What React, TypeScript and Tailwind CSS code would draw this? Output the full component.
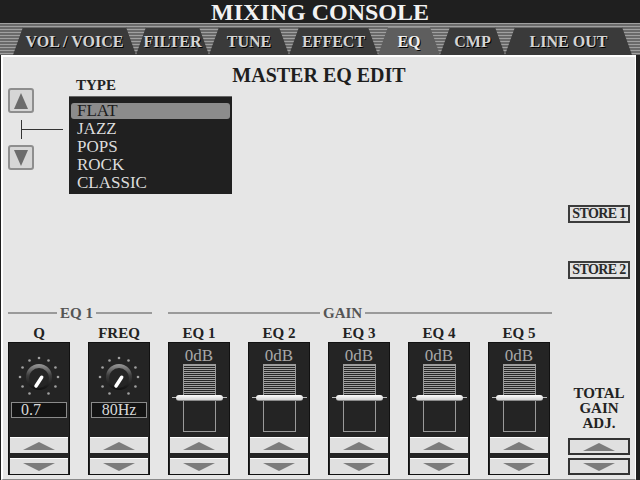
import React from "react";

const tabs = [
  { label: "VOL / VOICE", w: "w-[123px]" },
  { label: "FILTER", w: "w-[73px]" },
  { label: "TUNE", w: "w-[80px]" },
  { label: "EFFECT", w: "w-[89px]" },
  { label: "EQ", w: "w-[62px]", active: true },
  { label: "CMP", w: "w-[65px]" },
  { label: "LINE OUT", w: "w-[127px]" },
];

const types = ["FLAT", "JAZZ", "POPS", "ROCK", "CLASSIC"];

const gains = ["EQ 1", "EQ 2", "EQ 3", "EQ 4", "EQ 5"];

function Knob() {
  const dots = [];
  for (let i = 0; i < 12; i++) {
    if (i === 6) continue;
    const a = (i * 30 * Math.PI) / 180;
    dots.push(
      <circle key={i} cx={22 + 19 * Math.sin(a)} cy={22 - 19 * Math.cos(a)} r={1.3} fill="#a0a0a0" />
    );
  }
  return (
    <svg width="44" height="44" viewBox="0 0 44 44">
      <defs>
        <linearGradient id="knobRing" x1="0" y1="0" x2="0" y2="1">
          <stop offset="0" stopColor="#9a9a9a" />
          <stop offset="0.45" stopColor="#3c3c3c" />
          <stop offset="1" stopColor="#101010" />
        </linearGradient>
      </defs>
      {dots}
      <circle cx="22" cy="22" r="13" fill="url(#knobRing)" />
      <circle cx="22" cy="23" r="10" fill="#252525" />
      <line x1="24.7" y1="22.3" x2="19" y2="31" stroke="#ffffff" strokeWidth="3.5" strokeLinecap="round" />
    </svg>
  );
}

function Tri({ up }: { up?: boolean }) {
  return (
    <svg width="32" height="8" viewBox="0 0 32 8">
      <polygon points={up ? "0,8 16,0 32,8" : "0,0 32,0 16,8"} fill="#7c7c7c" />
    </svg>
  );
}

function BoxButtons() {
  return (
    <div className="mt-auto flex flex-col gap-[5px]">
      <div className="mx-px flex h-[16px] items-center justify-center border-t border-white bg-[#e0e0e0]">
        <Tri up />
      </div>
      <div className="mx-px flex h-[16px] items-center justify-center border-t border-white bg-[#e0e0e0]">
        <Tri />
      </div>
    </div>
  );
}

function KnobBox({ value, left }: { value: string; left?: boolean }) {
  return (
    <div className="flex h-[133px] flex-col border border-[#111] bg-[#242424]">
      <div className="mt-[12px] flex justify-center">
        <Knob />
      </div>
      <div
        className={
          "mx-[2px] mt-[3px] h-[16px] border border-[#8a8a8a] bg-[#131313] text-[16px] leading-[14px] text-[#d8d8d8] " +
          (left ? "pl-[9px] text-left" : "text-center")
        }
      >
        {value}
      </div>
      <BoxButtons />
    </div>
  );
}

function SliderBox() {
  return (
    <div className="flex h-[133px] flex-col border border-[#111] bg-[#242424]">
      <div className="mt-[4px] text-center text-[17px] leading-[17px] text-[#a8a8a8]">0dB</div>
      <div className="relative mx-auto h-[68px] w-[33px] border border-[#9a9a9a]">
        <div className="h-[32px] bg-[repeating-linear-gradient(to_bottom,#a0a0a0_0px,#a0a0a0_1px,#262626_1px,#262626_2px)]" />
        <div className="absolute -left-[12px] -right-[12px] top-[30px] h-[6px] bg-[linear-gradient(to_bottom,transparent_2px,#bdbdbd_2px,#bdbdbd_3px,transparent_3px)] px-[4px]">
          <div className="h-full rounded-[3px] border-b border-[#8a8a8a] bg-[linear-gradient(to_bottom,#ffffff,#d4d4d4)]" />
        </div>
      </div>
      <BoxButtons />
    </div>
  );
}

function SideButton({ up }: { up?: boolean }) {
  return (
    <div className="flex h-[25px] w-[26px] items-center justify-center rounded-[3px] border-2 border-[#8e8e8e] bg-[#d6d6d6]">
      <svg width="14" height="16" viewBox="0 0 14 16">
        <polygon points={up ? "0,16 7,0 14,16" : "0,0 14,0 7,16"} fill="#6c6c6c" />
      </svg>
    </div>
  );
}

function Store({ label }: { label: string }) {
  return (
    <div className="flex h-[18px] w-[62px] items-center justify-center border-2 border-[#3c3c3c] bg-[#e2e2e2] text-[14px] font-bold leading-[14px] tracking-[-0.6px] text-[#2a2a2a]">
      {label}
    </div>
  );
}

export default function App() {
  return (
    <div className="flex h-[480px] w-[640px] flex-col overflow-hidden bg-[#1f1f1f] font-['Liberation_Serif','Times_New_Roman',serif]">
      {/* title */}
      <div className="h-[23px] text-center text-[24px] font-bold leading-[24px] text-[#f2f2f2]">MIXING CONSOLE</div>

      {/* tabs */}
      <div className="flex h-[32px] items-end bg-[repeating-linear-gradient(to_bottom,#a0a0a0_0px,#a0a0a0_1px,#6a6a6a_1px,#6a6a6a_3px)] pl-[13px]">
        {tabs.map((t) => (
          <div
            key={t.label}
            className={
              "flex h-[28px] shrink-0 items-center justify-center border-t pt-px [clip-path:polygon(10px_0,calc(100%_-_10px)_0,100%_100%,0_100%)] text-[16px] font-bold [text-shadow:1px_1px_0_#000] " +
              t.w +
              " " +
              (t.active
                ? "border-[#8a8a8a] bg-[#5e5e5e] text-[#f0f0f0]"
                : "border-[#6a6a6a] bg-[#3a3a3a] text-[#d4d4d4]")
            }
          >
            {t.label}
          </div>
        ))}
      </div>

      {/* main panel */}
      <div className="ml-[1px] mr-[4px] flex flex-1 flex-col border-b border-l-2 border-r border-t-2 border-b-[#8a8a8a] border-l-white border-r-white border-t-white bg-[#e6e6e6]">
        <div className="grid h-[245px]">
          <div className="col-start-1 row-start-1 pt-[9px] text-center text-[20px] font-bold leading-[19px] text-[#1e1e1e]">
            MASTER EQ EDIT
          </div>
          <div className="col-start-1 row-start-1 flex">
            <div className="ml-[5px] mt-[31px] flex w-[26px] shrink-0 flex-col">
              <SideButton up />
              <div className="flex h-[32px] w-[60px] items-center">
                <div className="ml-[13px] h-[19px] w-px bg-[#333]" />
                <div className="h-px w-[41px] bg-[#333]" />
              </div>
              <SideButton />
            </div>

            <div className="ml-[35px] mt-[21px] flex flex-col">
              <div className="pl-[7px] text-[15px] font-bold leading-[15px] text-[#222]">TYPE</div>
              <div className="mt-[3px] h-[98px] w-[163px] border-t border-[#666] bg-[#202020] pt-[5px]">
                {types.map((t, i) => (
                  <div
                    key={t}
                    className={
                      "mx-[2px] px-[6px] text-[17px] " +
                      (i === 0
                        ? "my-px h-[16px] rounded-[3px] bg-[#8c8c8c] leading-[16px] text-[#1c1c1c]"
                        : "h-[18px] leading-[18px] text-[#dcdcdc]")
                    }
                  >
                    {t}
                  </div>
                ))}
              </div>
            </div>

            <div className="ml-auto mr-[5px] mt-[148px] flex flex-col gap-[38px]">
              <Store label="STORE 1" />
              <Store label="STORE 2" />
            </div>
          </div>
        </div>

        {/* bottom controls */}
        <div className="grid grid-cols-[repeat(8,62px)] grid-rows-[22px_18px_133px] gap-x-[18px] pl-[5px]">
          <div className="col-span-2 flex items-center">
            <div className="h-[2px] w-[49px] bg-[#9a9a9a]" />
            <div className="mx-[3px] text-[15px] font-bold leading-[15px] text-[#555]">EQ 1</div>
            <div className="-mr-[2px] h-[2px] flex-1 bg-[#9a9a9a]" />
          </div>
          <div className="col-span-5 flex items-center">
            <div className="h-[2px] w-[152px] bg-[#9a9a9a]" />
            <div className="mx-[3px] text-[15px] font-bold leading-[15px] text-[#555]">GAIN</div>
            <div className="-mr-[2px] h-[2px] flex-1 bg-[#9a9a9a]" />
          </div>
          <div />

          {["Q", "FREQ", ...gains].map((l) => (
            <div key={l} className="text-center text-[15px] font-bold leading-[18px] text-[#222]">
              {l}
            </div>
          ))}
          <div />

          <KnobBox value="0.7" left />
          <KnobBox value="80Hz" />
          {gains.map((g) => (
            <SliderBox key={g} />
          ))}
          <div className="flex flex-col">
            <div className="mb-[7px] mt-auto text-center text-[15px] font-bold leading-[15px] text-[#222]">
              TOTAL
              <br />
              GAIN
              <br />
              ADJ.
            </div>
            <div className="flex flex-col gap-[3px]">
              <div className="flex h-[17px] items-center justify-center border-2 border-[#333] bg-[#e0e0e0]">
                <Tri up />
              </div>
              <div className="flex h-[17px] items-center justify-center border-2 border-[#333] bg-[#e0e0e0]">
                <Tri />
              </div>
            </div>
          </div>
        </div>
      </div>
    </div>
  );
}
